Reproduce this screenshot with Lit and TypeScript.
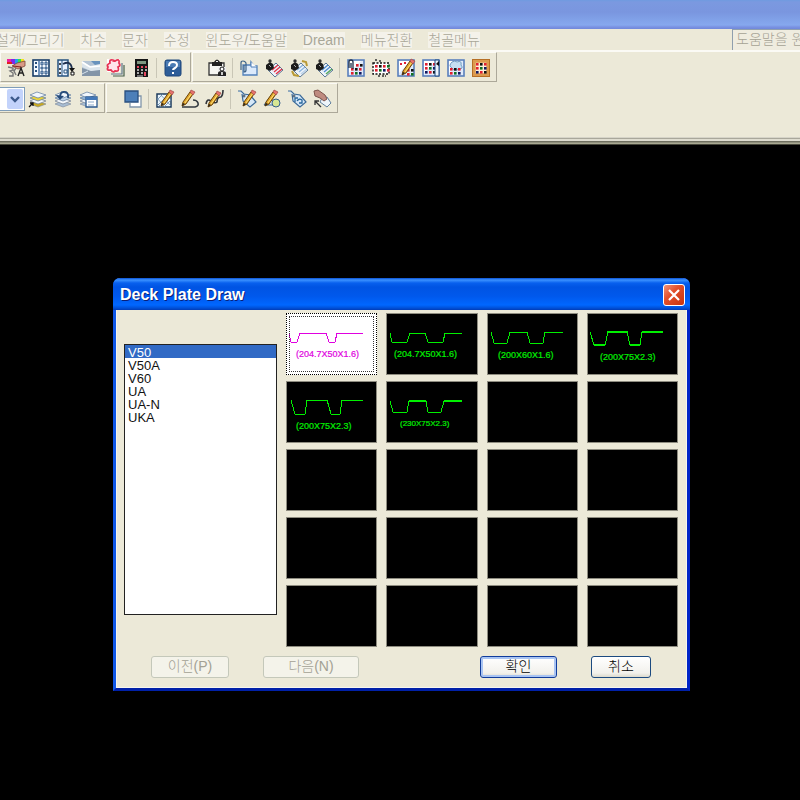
import { LitElement, html, css, svg } from "lit";
import { customElement, property, state } from "lit/decorators.js";
import { classMap } from "lit/directives/class-map.js";

const dots = (x: number, y: number, cols: number, rows: number) => {
  const colors = ["#e02030", "#111", "#e02030", "#107020", "#101860"];
  const out = [];
  for (let r = 0; r < rows; r++)
    for (let c = 0; c < cols; c++)
      out.push(svg`<rect x=${x + c * 4} y=${y + r * 4} width="2.6" height="2.6" fill=${colors[(c + r * 2) % 5]}/>`);
  return out;
};
const frame = svg`<rect x="1" y="1" width="16" height="16" fill="#dfeafa" stroke="#5a80bc" stroke-width="1.6"/><path d="M2 2h12L2 14z" fill="#fff"/>`;
const clip = svg`<path d="M2 9V3q0-2 2-2t2 2v7M4 4v5" fill="none" stroke="#20304a" stroke-width="1.3"/>`;
const pencil = svg`<path d="M5 16l1-4 7-10 3 2-7 10z" fill="#e0a52c" stroke="#6a4208"/><path d="M8 13l7-10" stroke="#ffe07a"/><path d="M13 2l1-2 4 2-2 3z" fill="#e8736c" stroke="#a04848" stroke-width=".7"/><path d="M5 16l1-3 2 1z" fill="#222"/>`;
const sheets = (a: string, b: string) => svg`<path d="M1 14l7-3 9 3-8 3z" fill=${a} stroke="#7a8698" stroke-width=".6"/><path d="M1 11l7-3 9 3-8 3z" fill="#f4f8fc" stroke="#7a8698" stroke-width=".8"/><path d="M1 8l7-3 9 3-8 3z" fill=${b} stroke="#6c86a6" stroke-width=".8"/><path d="M1 5l7-3 9 3-8 3z" fill="#f0f6fc" stroke="#6c86a6" stroke-width=".8"/>`;
const tag = svg`<path d="M0 1h3l3 3 6 1 6 7-6 5-7-6-1-7" fill="#d6e8f8" stroke="#3c6a98" stroke-width="1.2"/><circle cx="6" cy="6" r="1" fill="#fff" stroke="#345"/>`;
const brush = (a: string, b: string) => svg`<path d="M3 11l8-7 7 7-8 7z" fill="#edf3fa" stroke="#5b7896"/><path d="M7 11l6-5M9 13l6-5" stroke=${a} stroke-width="1.3"/><path d="M11 15l6-5" stroke=${b} stroke-width="1.5"/><path d="M1 6l4-3 3 2 1 4-4 3-4-2z" fill="#1b1b1b"/><circle cx="5" cy="2" r="1.7" fill="#333"/><path d="M4 6l2 2" stroke="#aaa"/>`;

const icons: Record<string, unknown> = {
  palette: svg`<path d="M0 0h4v5H0z" fill="#f020a0"/><path d="M4 0h4v5H4z" fill="#8028e8"/><path d="M8 0h4v5H8z" fill="#20a0f0"/><path d="M11 0h3v4h-3z" fill="#30e050"/><path d="M14 0h3v3h-3z" fill="#f4e020"/><path d="M0 3h5v2H0z" fill="#e02020"/><path d="M5 7l5-3 8-2v5l-7 3z" fill="#d99a86" stroke="#7d4438" stroke-width=".8"/><path d="M6 7l8 1" stroke="#8a2020"/><path d="M1 8l5 1v2l-3 1 3 2v3H2M9 9l-2 3 2 4" fill="none" stroke="#777" stroke-width="1.4"/><path d="M11 17l3-8 3 8M12 14h4" fill="none" stroke="#222" stroke-width="1.4"/>`,
  panes: svg`<rect x="1" y="1" width="16" height="16" fill="#f4f9ff" stroke="#173c68" stroke-width="1.6"/><path d="M7 2v14" stroke="#3c6ca4" stroke-width="1.4"/><path d="M3 4h2M3 8h2M3 12h2" stroke="#26507f" stroke-width="2"/><g fill="#b9d2f0" stroke="#234a78" stroke-width=".9"><path d="M9 3h2v3H9zM13 3h2v3h-2zM9 8h2v2H9zM13 8h2v2h-2zM9 12h2v3H9zM13 12h2v3h-2z"/></g>`,
  paneArrow: svg`<rect x="1" y="1" width="10" height="16" fill="#e8f2ff" stroke="#24527f" stroke-width="1.5"/><path d="M5 1v16" stroke="#24527f"/><path d="M3 4v2M3 9v2M3 13v2" stroke="#111" stroke-width="1.5"/><path d="M7 11h3v3H7z" fill="#fff" stroke="#24527f"/><path d="M6 5q8-4 9 5" fill="none" stroke="#1d3050" stroke-width="1.8"/><path d="M12 9h6l-3 4z" fill="#111"/><path d="M14 13h3v3h-3z" fill="#fff" stroke="#111"/>`,
  roll: svg`<path d="M0 2h18v15H0z" fill="#b4c4d4"/><path d="M0 9l9 3 9-2v7H0z" fill="#8395a8"/><path d="M9 2h9v9z" fill="#6892bd"/><path d="M0 2l8 5 10-2v6l-9 1-9-4z" fill="#dce5ec"/><path d="M0 3l8 5 10-1" fill="none" stroke="#fff" stroke-width="1.6"/><path d="M0 15l6-3" stroke="#d8e4ee"/>`,
  cloud: svg`<path d="M4 15h11V4" fill="none" stroke="#60798c" stroke-width="1.2"/><path d="M6 17h11V6" fill="none" stroke="#47604c" stroke-width="1.2"/><path d="M0 0h13v13H0z" fill="#fff"/><path d="M3 4q-1-4 3-3q3 1 2 1q5-3 4 2q2 3-1 4q2 5-3 4q-2 2-4-1q-5 1-3-3q-2-2 2-4z" fill="#ffe4ea" stroke="#e73354" stroke-width="1.8"/>`,
  calc: svg`<rect x="3" width="13" height="18" fill="#151515"/><path d="M5 2h9v3H5z" fill="#7e9680"/><path d="M5 8h2M9 8h2M13 8h2" stroke="#e44860" stroke-width="2"/><path d="M5 11h2M9 11h2M13 11h2M5 14h2M9 14h2" stroke="#ddd" stroke-width="1.6"/><path d="M13 13v4" stroke="#e44860" stroke-width="2"/><path d="M5 17h6" stroke="#ccc"/>`,
  help: svg`<rect x="1" y="1" width="16" height="16" rx="2" fill="#2d5d98" stroke="#1e477b"/><path d="M2 2h14v6H2z" fill="#4a7bb4"/><path d="M5 7q0-4 4-4t4 3q0 2-2 3t-2 2" fill="none" stroke="#fff" stroke-width="2"/><path d="M8 13h2v2H8z" fill="#fff"/>`,
  paste: svg`<path d="M1 4h15v12H1z" fill="#f6f6f2" stroke="#333" stroke-width="1.3"/><path d="M4 7V3h2q3-5 6 0h2v4z" fill="#222"/><path d="M8 2h2v1H8z" fill="#eee"/><path d="M10 8h8v10h-8z" fill="#eee"/><circle cx="14" cy="10" r="2" fill="#fff" stroke="#111"/><path d="M10 17v-3q0-2 4-2t4 2v3z" fill="#222"/><path d="M13 13h2v3h-2z" fill="#ccc"/>`,
  blockClip: svg`<path d="M3 6h8V3l3 4h3v9H3z" fill="#dceafb" stroke="#5080ba" stroke-width="1.3"/><path d="M11 3v5h6" fill="#fff" stroke="#5080ba"/><path d="M1 11V4q0-2 2-2t3 2v7q0 2-2 2V6" fill="none" stroke="#3b6187" stroke-width="1.2"/>`,
  brushRed: brush("#e23348", "#e23348"),
  brushGold: svg`${brush("#8bb4dd", "#b9d1e9")}<path d="M12 2l4 1 1 4M2 12l2 4 5 1" fill="none" stroke="#b99a36" stroke-width="2"/>`,
  brushGreen: brush("#4e8bd0", "#55a85c"),
  gridClip: svg`${frame}${dots(9, 5, 2, 1)}${dots(4, 9, 3, 2)}${clip}`,
  gridDash: svg`<rect x="1" y="4" width="16" height="11" fill="#fff" stroke="#111" stroke-dasharray="2 1.5" stroke-width="1.4"/>${dots(3, 6, 4, 2)}<path d="M3 1h2M7 2h2M6 17h2M10 17h2M13 17h1" stroke="#333" stroke-width="1.5"/>`,
  gridPencil: svg`${frame}<path d="M3 4h2v2H3zM7 3h2v2H7z" fill="#df2036"/>${dots(10, 10, 2, 2)}${pencil}`,
  gridColumn: svg`${frame}${dots(3, 4, 3, 3)}<path d="M13 1h4v16h-4z" fill="#edf4fc" stroke="#1e4b80"/><path d="M14 5l3-3v5z" fill="#111"/>`,
  gridCloud: svg`${frame}<path d="M5 3q3-2 5 0q5-2 4 3q3 4-2 4q-5 3-7-1q-4-2 0-6z" fill="#c7e0f3" stroke="#729cc1"/>${dots(3, 9, 3, 2)}`,
  gridGold: svg`<rect x="2" y="2" width="14" height="14" fill="#fff1dc" stroke="#dc9a4e" stroke-width="3.5"/><rect x=".5" y=".5" width="17" height="17" fill="none" stroke="#b66f25"/>${dots(4, 4, 3, 3)}`,
  layersArrow: svg`${sheets("#c9a91e", "#e9d238")}<path d="M0 17l4-4M1 13h3v3" fill="none" stroke="#111" stroke-width="1.3"/>`,
  layersBack: svg`${sheets("#a8bdd3", "#bdd2e8")}<path d="M14 8q1-7-5-6-2 0-3 4" fill="none" stroke="#264b7a" stroke-width="1.8"/><path d="M2 5l4 5 4-4z" fill="#264b7a"/>`,
  layersWindow: svg`${sheets("#a8bdd3", "#8fb4d8")}<path d="M7 7h11v10H7z" fill="#fff" stroke="#28578e" stroke-width="1.3"/><path d="M7 7h11v3H7z" fill="#4378b8"/><path d="M9 12h6M9 15h6" stroke="#8aa9cb"/>`,
  order: svg`<path d="M6 6h11v11H6v-4" fill="#fff" stroke="#8095aa" stroke-width="1.3"/><path d="M1 1h13v11H1z" fill="#4c7fb9" stroke="#294f7f" stroke-width="1.3"/>`,
  hatchEdit: svg`<path d="M1 4h14v13H1z" fill="#eaf5fd" stroke="#1d3b5c" stroke-width="1.5"/><path d="M1 8l8 9M1 13l4 4M4 4l11 12M10 4l5 6M1 10l6-6M1 16L13 4M8 17l7-7" stroke="#6a8aaa" stroke-width=".8"/>${pencil}`,
  polyEdit: svg`<path d="M1 17h13q4-1 3-4t-5-3" fill="none" stroke="#333a40" stroke-width="1.6"/><g transform="translate(-4 0)">${pencil}</g>`,
  splineEdit: svg`<path d="M0 14q1-6 5-3t6 1q0-5 4-5 2-2 2-7" fill="none" stroke="#30343a" stroke-width="1.6"/><g transform="translate(-3 1)">${pencil}</g>`,
  tagEdit: svg`${tag}${pencil}`,
  shapeEdit: svg`<path d="M1 15l6-8 5 8z" fill="#d8e9f8" stroke="#386895"/><circle cx="13" cy="13" r="4" fill="#d6e693" stroke="#35608b"/><g transform="translate(-3 0)">${pencil}</g>`,
  tagSync: svg`${tag}<path d="M7 12V8h3M9 11q2-3 5-1v3h-3" fill="none" stroke="#28679d" stroke-width="1.3"/>`,
  handTag: svg`<path d="M9 8l5-1 4 6-4 4-7-5z" fill="#edf4fa" stroke="#60809f"/><path d="M1 1l4-1 7 5 2 4-3 2-4-3-5-2z" fill="#bf8b80" stroke="#7e554d"/><path d="M8 17l-6-6M2 15v-4h4" fill="none" stroke="#333" stroke-width="1.3"/>`,
};

/** One docked strip of icon buttons; "|" stands for a separator. */
@customElement("tool-strip")
export class ToolStrip extends LitElement {
  @property({ attribute: false }) items: string[] = [];
  static styles = css`
    :host { display: flex; align-items: center; box-sizing: border-box; height: 30px; padding: 2px 3px 0 2px; border-right: 1px solid #aca899; border-bottom: 1px solid #aca899; border-top: 1px solid #fbfaf5; border-left: 1px solid #fbfaf5; }
    .tool { width: 25px; height: 24px; padding: 0; border: 0; background: none; display: grid; place-items: center; }
    .sep { width: 1px; height: 20px; margin: 0 3px; background: #c9c6b6; }
    svg { width: 18px; height: 18px; display: block; overflow: visible; }
  `;
  render() {
    return html`<slot></slot>${this.items.map((name) =>
      name === "|"
        ? html`<span class="sep"></span>`
        : html`<button class="tool" aria-label=${name}><svg viewBox="0 0 18 18">${icons[name]}</svg></button>`
    )}`;
  }
}

interface Profile { line: string; top?: string; label: string; x: number; y: number; small?: boolean }

const profiles: Profile[] = [
  { line: "3,19 5,28 11,28 14,19 40,19 43,28 49,28 51,19 77,19", label: "(204.7X50X1.6)", x: 10, y: 43 },
  { line: "4,19 6,28 21,28 24,19 39,19 42,28 57,28 59,19 76,19", label: "(204.7X50X1.6)", x: 8, y: 43 },
  { line: "4,18 7,29 20,29 23,18 40,18 43,29 56,29 58,18 76,18", label: "(200X60X1.6)", x: 11, y: 44 },
  { line: "3,18 7,31 18,31 21,18 40,18 43,31 53,31 55,18 76,18", top: "M20 18H41M55 18H76M7 31H18M43 31H53", label: "(200X75X2.3)", x: 13, y: 46 },
  { line: "5,18 9,32 19,32 21,18 41,18 45,32 54,32 56,18 77,18", label: "(200X75X2.3)", x: 10, y: 47 },
  { line: "4,19 7,30 21,30 23,19 40,19 42,30 55,30 58,19 76,19", top: "M23 19H40M58 19H76", label: "(230X75X2.3)", x: 14, y: 44, small: true },
];

@customElement("deck-dialog")
export class DeckDialog extends LitElement {
  @state() private picked = 0;
  static styles = css`
    :host { display: block; box-sizing: border-box; border: 3px solid #0a3fd8; border-top: 0; border-bottom-color: #0020a8; border-right-color: #0024c8; border-left-color: #1058e8; border-radius: 7px 7px 0 0; background: #ece9d8; font: 300 14px/18px "Liberation Sans", "Noto Sans CJK KR", sans-serif; }
    .title { display: flex; align-items: center; justify-content: space-between; height: 32px; box-sizing: border-box; margin: 0 -3px; padding: 1px 5px 0 7px; border-radius: 7px 7px 0 0; background: linear-gradient(#0a4fd0 0, #3b92ff 2px, #0860ee 5px, #0054e3 9px, #0058ec 18px, #0067ff 27px, #0050d8 30px, #003cb8 32px); color: #fff; }
    h1 { margin: 0; font: bold 16px/20px "Liberation Sans", sans-serif; text-shadow: 1px 1px #0a1f78; }
    .close { width: 22px; height: 22px; padding: 0; border: 1px solid #fff; border-radius: 3px; background: linear-gradient(135deg, #f0937a, #e2502c 40%, #c8330c); display: grid; place-items: center; }
    .body { display: grid; grid-template-columns: 153px 1fr; column-gap: 9px; padding: 3px 8px 9px 7px; border: 1px solid #f6f5ee; border-top: 0; }
    .list { box-sizing: border-box; width: 153px; height: 271px; margin: 31px 0 0; padding: 0; border: 1px solid #222; border-radius: 0; outline: 0; background: #fff; font: 13px/13px "Liberation Sans", sans-serif; overflow: hidden; }
    .list option { min-height: 0; height: 13px; padding: 0 0 0 3px; color: #111; }
    .list option:checked { background: #316ac5 linear-gradient(#316ac5, #316ac5); color: #fff; -webkit-text-fill-color: #fff; }
    .tiles { display: grid; grid-template-columns: repeat(4, 1fr); grid-auto-rows: 62px; gap: 6px 9px; }
    .tile { min-width: 0; padding: 0; border: 1px solid #8e8c80; background: #000; color: #00f000; overflow: hidden; text-align: left; }
    .tile.on { border: 1px dotted #000; outline: 1px dotted #333; outline-offset: -4px; background: #fff; color: #e000e0; }
    .tile svg { display: block; width: 90px; height: 60px; }
    .tile polyline, .tile path { shape-rendering: crispEdges; }
    .tile text { font: 9px "Liberation Sans", sans-serif; fill: currentColor; stroke: currentColor; stroke-width: .2px; }
    .tile text.small { font-size: 8px; }
    .actions { grid-column: 1 / -1; display: flex; padding: 9px 27px 0; }
    .btn { box-sizing: border-box; height: 22px; padding: 0 0 2px; border: 1px solid #1c4a80; border-radius: 3px; background: linear-gradient(#fff, #f2f1ec 80%, #dcd9cc); font: inherit; line-height: 18px; color: #000; }
    .prev { width: 78px; } .next { width: 96px; margin-left: 34px; } .ok { width: 77px; margin-left: auto; } .cancel { width: 60px; margin-left: 34px; }
    .ok { box-shadow: inset 0 0 0 2px #a9c4f2; border-color: #103c9c; }
    .btn:disabled { background: #f4f3ea; border-color: #c4c8ba; color: #a3a194; }
  `;
  private tile(i: number) {
    const p = profiles[i];
    return html`<button class=${classMap({ tile: true, on: i === this.picked })} aria-label=${p ? p.label : "empty"} @click=${() => (this.picked = i)}>
      ${p
        ? html`<svg viewBox="1 0 90 60" fill="none" stroke="currentColor"><polyline points=${p.line} stroke-width="1"></polyline>
            ${p.top ? svg`<path d=${p.top} stroke-width="2"/>` : ""}<text class=${p.small ? "small" : ""} x=${p.x} y=${p.y}>${p.label}</text></svg>`
        : ""}
    </button>`;
  }
  render() {
    return html`
      <header class="title">
        <h1>Deck Plate Draw</h1>
        <button class="close" aria-label="close"><svg width="14" height="14" viewBox="0 0 14 14"><path d="M2 2l10 10M12 2L2 12" stroke="#fff" stroke-width="2.2"/></svg></button>
      </header>
      <div class="body">
        <select class="list" size="6" aria-label="Deck type">
          ${["V50", "V50A", "V60", "UA", "UA-N", "UKA"].map((n, i) => html`<option ?selected=${i === 0}>${n}</option>`)}
        </select>
        <div class="tiles">${Array.from({ length: 20 }, (_, i) => this.tile(i))}</div>
        <footer class="actions">
          <button class="btn prev" disabled>이전(P)</button>
          <button class="btn next" disabled>다음(N)</button>
          <button class="btn ok">확인</button>
          <button class="btn cancel">취소</button>
        </footer>
      </div>`;
  }
}

@customElement("app-root")
export class AppRoot extends LitElement {
  static styles = css`
    :host { display: flex; flex-direction: column; min-height: 100vh; background: #000; overflow: hidden; font: 300 14px/18px "Liberation Sans", "Noto Sans CJK KR", sans-serif; }
    .caption { height: 29px; background: linear-gradient(#6f9be0 0, #7b99e0 2px, #7a96df 12px, #7f9fe6 18px, #86a8ee 25px, #7a92e2 27px, #7088da 29px); }
    .menubar { display: flex; align-items: center; height: 21px; background: #ece9d8; border-bottom: 2px solid #fbfaf5; }
    .menu { display: flex; gap: 16px; margin-left: -4px; }
    .menu button { padding: 0; border: 0; background: #f4f2ea; color: #a9a798; font: inherit; line-height: 16px; white-space: nowrap; }
    .ask { box-sizing: border-box; align-self: stretch; width: 68px; margin-left: auto; padding: 0 0 2px 3px; border: 1px solid #8f9fae; border-width: 1px 0 0 1px; border-radius: 0; background: #efecdf; color: #a5a294; font: inherit; }
    .docks { box-sizing: border-box; height: 85px; background: #ece9d8; }
    .row { display: flex; gap: 1px; height: 30px; margin-bottom: 1px; }
    .a1 { width: 191px; } .b1 { padding-left: 11px; }
    .a2 { padding-left: 0; border-left: 0; width: 105px; } .b2 { padding-left: 13px; }
    .layer { appearance: none; box-sizing: border-box; width: 25px; height: 24px; margin: 0; padding: 0; border: 1px solid #7f9db9; border-left: 0; border-radius: 0; color: transparent; background: #fff; }
    .combo { display: grid; align-items: center; }
    .combo > * { grid-area: 1 / 1; }
    .arrow { justify-self: end; margin-right: 2px; width: 16px; height: 20px; border-radius: 2px; background: #c3d3fb; pointer-events: none; }
    .edge { height: 8px; background: linear-gradient(#d6d4c8 0 1px, #a9a79b 1px 2px, #dedccf 2px 4px, #707060 4px 5px, #8f8f7c 5px 6px, #a9a992 6px 7px, #48483c 7px 8px); }
    .canvas { position: relative; flex: 1; }
    .window { position: absolute; left: 113px; top: 133px; width: 577px; }
  `;
  render() {
    const menus = ["설계/그리기", "치수", "문자", "수정", "윈도우/도움말", "Dream", "메뉴전환", "철골메뉴"];
    return html`
      <div class="caption"></div>
      <nav class="menubar">
        <div class="menu">${menus.map((m) => html`<button>${m}</button>`)}</div>
        <input class="ask" aria-label="도움말" .value=${"도움말을 원하면"} />
      </nav>
      <div class="docks">
        <div class="row">
          <tool-strip class="a1" .items=${["palette", "panes", "paneArrow", "roll", "cloud", "calc", "|", "help"]}></tool-strip>
          <tool-strip class="b1" .items=${["paste", "|", "blockClip", "brushRed", "brushGold", "brushGreen", "|", "gridClip", "gridDash", "gridPencil", "gridColumn", "gridCloud", "gridGold"]}></tool-strip>
        </div>
        <div class="row">
          <tool-strip class="a2" .items=${["layersArrow", "layersBack", "layersWindow"]}>
            <span class="combo">
              <select class="layer" aria-label="layer"><option>0</option></select>
              <svg class="arrow" viewBox="0 0 16 20"><path d="M4 8l4 4 4-4" fill="none" stroke="#3c5a8c" stroke-width="2.4"/></svg>
            </span>
          </tool-strip>
          <tool-strip class="b2" .items=${["order", "|", "hatchEdit", "polyEdit", "splineEdit", "|", "tagEdit", "shapeEdit", "tagSync", "handTag"]}></tool-strip>
        </div>
      </div>
      <div class="edge"></div>
      <main class="canvas"><deck-dialog class="window"></deck-dialog></main>`;
  }
}
